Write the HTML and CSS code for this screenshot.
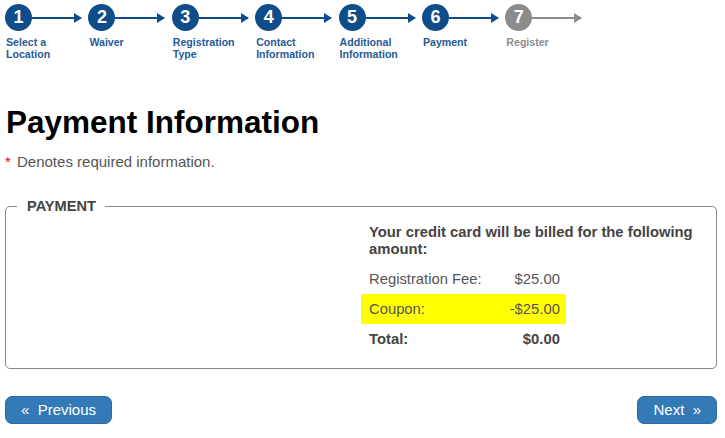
FILE: index.html
```html
<!DOCTYPE html>
<html lang="en">
<head>
  <meta charset="UTF-8">
  <title>Payment Information</title>
  <link rel="stylesheet" href="styles.css">
</head>
<body>
  <div class="page">
    <!-- Progress steps -->
    <ol class="steps">
      <li class="step done">
        <div class="step-top"><span class="num">1</span><span class="arrow"></span></div>
        <div class="label">Select a<br>Location</div>
      </li>
      <li class="step done">
        <div class="step-top"><span class="num">2</span><span class="arrow"></span></div>
        <div class="label">Waiver</div>
      </li>
      <li class="step done">
        <div class="step-top"><span class="num">3</span><span class="arrow"></span></div>
        <div class="label">Registration<br>Type</div>
      </li>
      <li class="step done">
        <div class="step-top"><span class="num">4</span><span class="arrow"></span></div>
        <div class="label">Contact<br>Information</div>
      </li>
      <li class="step done">
        <div class="step-top"><span class="num">5</span><span class="arrow"></span></div>
        <div class="label">Additional<br>Information</div>
      </li>
      <li class="step done">
        <div class="step-top"><span class="num">6</span><span class="arrow"></span></div>
        <div class="label">Payment</div>
      </li>
      <li class="step todo">
        <div class="step-top"><span class="num">7</span><span class="arrow"></span></div>
        <div class="label">Register</div>
      </li>
    </ol>

    <h1>Payment Information</h1>
    <p class="required"><span class="star">*</span> Denotes required information.</p>

    <fieldset class="payment">
      <legend>PAYMENT</legend>
      <div class="payment-cols">
        <div class="col-left"></div>
        <div class="col-right">
          <p class="billed">Your credit card will be billed for the following amount:</p>
          <table class="amounts">
            <tr>
              <td>Registration Fee:</td>
              <td class="amt">$25.00</td>
            </tr>
            <tr class="coupon">
              <td>Coupon:</td>
              <td class="amt">-$25.00</td>
            </tr>
            <tr class="total">
              <td>Total:</td>
              <td class="amt">$0.00</td>
            </tr>
          </table>
        </div>
      </div>
    </fieldset>

    <div class="nav-buttons">
      <a href="#" class="btn">&laquo;&nbsp; Previous</a>
      <a href="#" class="btn">Next &nbsp;&raquo;</a>
    </div>
  </div>
</body>
</html>
```

FILE: styles.css
```css
/* General styles */
* {
  margin: 0;
  padding: 0;
  box-sizing: border-box;
}
body {
  font-family: "Liberation Sans", Arial, sans-serif;
  background-color: #fff;
  color: #555;
}
.page {
  padding: 4px 8px 0 5px;
}

/* Steps */
.steps {
  list-style: none;
  display: flex;
}
.step {
  width: 83.4px;
}
.step-top {
  display: flex;
  align-items: center;
  height: 27px;
}
.num {
  width: 27px;
  height: 27px;
  border-radius: 50%;
  background-color: #0f4c8a;
  color: #fff;
  font-weight: bold;
  font-size: 18px;
  line-height: 27px;
  text-align: center;
  flex: none;
}
.arrow {
  position: relative;
  width: 49px;
  height: 2px;
  background-color: #0f4c8a;
}
.arrow::after {
  content: "";
  position: absolute;
  right: -1px;
  top: -4px;
  border-left: 8px solid #0f4c8a;
  border-top: 5px solid transparent;
  border-bottom: 5px solid transparent;
}
.step.todo .num,
.step.todo .arrow {
  background-color: #8c8c8c;
}
.step.todo .arrow::after {
  border-left-color: #8c8c8c;
}
.label {
  margin-top: 5px;
  padding-left: 1px;
  font-size: 10.6px;
  font-weight: bold;
  line-height: 12px;
  color: #1f5b98;
}
.step.todo .label {
  color: #8c8c8c;
}

/* Heading */
h1 {
  margin-top: 44px;
  font-size: 31.5px;
  color: #000;
  line-height: 36px;
  padding-left: 1px;
}
.required {
  margin-top: 13px;
  font-size: 15px;
  color: #555;
}
.star {
  color: #e00;
  margin-right: 2px;
}

/* Payment box */
.payment {
  margin-top: 28px;
  border: 1px solid #888;
  border-radius: 5px;
  padding: 0 0 14px 0;
}
.payment legend {
  margin-left: 11px;
  padding: 0 9px 0 10px;
  font-size: 14.6px;
  font-weight: bold;
  color: #444;
}
.payment-cols {
  display: flex;
}
.col-left,
.col-right {
  width: 50%;
}
.col-right {
  padding-top: 10px;
}
.billed {
  padding: 0 8px;
  font-size: 14.8px;
  font-weight: bold;
  line-height: 17px;
  color: #444;
}
.amounts {
  margin-top: 6px;
  border-collapse: collapse;
  font-size: 14.8px;
}
.amounts td {
  padding: 7px 8px 6px 8px;
  line-height: 17px;
}
.amounts td.amt {
  text-align: right;
  padding-left: 20px;
  padding-right: 6px;
}
.amounts .coupon {
  background-color: #ffff00;
}
.amounts .total {
  font-weight: bold;
  color: #444;
}

/* Buttons */
.nav-buttons {
  display: flex;
  justify-content: space-between;
  margin-top: 27px;
}
.btn {
  display: inline-block;
  background-color: #337ab7;
  color: #fff;
  text-decoration: none;
  font-size: 15px;
  line-height: 18px;
  padding: 4px 15px;
  border-radius: 7px;
  border: 1px solid #2e6da4;
}
```
